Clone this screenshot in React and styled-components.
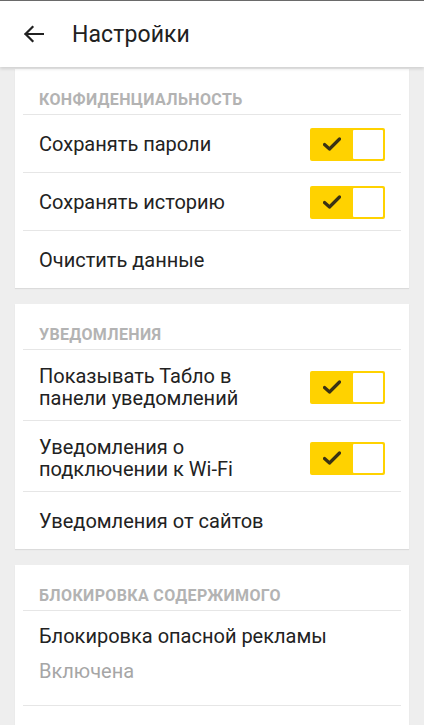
import React from "react";
import styled, { createGlobalStyle } from "styled-components";

const Global = createGlobalStyle`
  html, body { margin: 0; padding: 0; }
  body {
    background: #eeeeee;
    font-family: Roboto, "Noto Sans", "Liberation Sans", sans-serif;
    -webkit-font-smoothing: antialiased;
  }
`;

const Page = styled.div`
  width: 424px;
  height: 725px;
  overflow: hidden;
  background: #eeeeee;
`;

const TopBar = styled.header`
  position: relative;
  z-index: 2;
  height: 66px;
  border-top: 1px solid #6a6a6a;
  background: #ffffff;
  box-shadow: 0 2px 3px rgba(0, 0, 0, 0.12);
  display: flex;
  align-items: center;
  padding: 0 0 0 22px;
  gap: 27px;
`;

const BackButton = styled.button`
  border: 0;
  background: none;
  padding: 0;
  width: 23px;
  height: 23px;
  display: flex;
  align-items: center;
  justify-content: center;
  color: #212121;
`;

const Title = styled.h1`
  margin: 0;
  font-size: 23px;
  font-weight: 400;
  color: #212121;
  letter-spacing: 0.1px;
`;

const Content = styled.main`
  padding: 2px 15px 0;
  display: flex;
  flex-direction: column;
  gap: 16px;
`;

const Card = styled.section`
  background: #ffffff;
  box-shadow: 0 1px 1px rgba(0, 0, 0, 0.08);
  padding: 0 8px;
`;

const SectionTitle = styled.div`
  height: 46px;
  box-sizing: border-box;
  padding: 22px 16px 0;
  font-size: 16px;
  line-height: 18px;
  font-weight: 700;
  color: #b3b3b3;
  text-transform: uppercase;
  letter-spacing: 0.35px;
  border-bottom: 1px solid #e6e6e6;
`;

const Row = styled.div`
  display: flex;
  align-items: center;
  justify-content: space-between;
  box-sizing: border-box;
  min-height: ${(p) => (p.tall ? 71 : 58)}px;
  padding: ${(p) => (p.tall ? "14px 16px 10px" : "1px 16px 0")};
  border-bottom: 1px solid #e6e6e6;
  &:last-child {
    border-bottom: 0;
    min-height: ${(p) => (p.tall ? 70 : 57)}px;
  }
`;

const TextBlock = styled.div`
  display: flex;
  flex-direction: column;
`;

const Label = styled.div`
  font-size: 20px;
  line-height: 22.5px;
  color: #222222;
`;

const Sub = styled.div`
  font-size: 20px;
  line-height: 22.5px;
  color: #a6a6a6;
  margin-top: 12px;
`;

const DetailRow = styled.div`
  box-sizing: border-box;
  height: 95px;
  padding: 14px 16px 0;
  border-bottom: 1px solid #e6e6e6;
`;

const Toggle = styled.div`
  width: 75px;
  height: 33px;
  box-sizing: border-box;
  flex-shrink: 0;
  background: #ffd200;
  border-radius: 2px;
  padding: 2px;
  display: flex;
  align-items: stretch;
  justify-content: space-between;
`;

const CheckArea = styled.div`
  flex: 1;
  display: flex;
  align-items: center;
  justify-content: center;
  padding-right: 2px;
`;

const Knob = styled.div`
  width: 30px;
  background: #ffffff;
  border-radius: 1px;
`;

const Switch = () => (
  <Toggle>
    <CheckArea>
      <svg width="18" height="14" viewBox="0 0 18 14">
        <path d="M1.5 7.5 L6.5 12 L16.5 2" fill="none" stroke="#3a3214" strokeWidth="3.2" strokeLinecap="round" strokeLinejoin="round" />
      </svg>
    </CheckArea>
    <Knob />
  </Toggle>
);

export default function App() {
  return (
    <Page>
      <Global />
      <TopBar>
        <BackButton aria-label="Назад">
          <svg width="21" height="18" viewBox="0 0 21 18">
            <path d="M20 9 H2.5 M9.5 2 L2.5 9 L9.5 16" fill="none" stroke="#212121" strokeWidth="2.2" strokeLinecap="square" />
          </svg>
        </BackButton>
        <Title>Настройки</Title>
      </TopBar>
      <Content>
        <Card>
          <SectionTitle>Конфиденциальность</SectionTitle>
          <Row>
            <Label>Сохранять пароли</Label>
            <Switch />
          </Row>
          <Row>
            <Label>Сохранять историю</Label>
            <Switch />
          </Row>
          <Row>
            <Label>Очистить данные</Label>
          </Row>
        </Card>
        <Card>
          <SectionTitle>Уведомления</SectionTitle>
          <Row tall>
            <Label>Показывать Табло в<br />панели уведомлений</Label>
            <Switch />
          </Row>
          <Row tall>
            <Label>Уведомления о<br />подключении к Wi-Fi</Label>
            <Switch />
          </Row>
          <Row>
            <Label>Уведомления от сайтов</Label>
          </Row>
        </Card>
        <Card>
          <SectionTitle>Блокировка содержимого</SectionTitle>
          <DetailRow>
            <TextBlock>
              <Label>Блокировка опасной рекламы</Label>
              <Sub>Включена</Sub>
            </TextBlock>
          </DetailRow>
          <Row>
            <Label>Дополнительная блокировка</Label>
          </Row>
        </Card>
      </Content>
    </Page>
  );
}
